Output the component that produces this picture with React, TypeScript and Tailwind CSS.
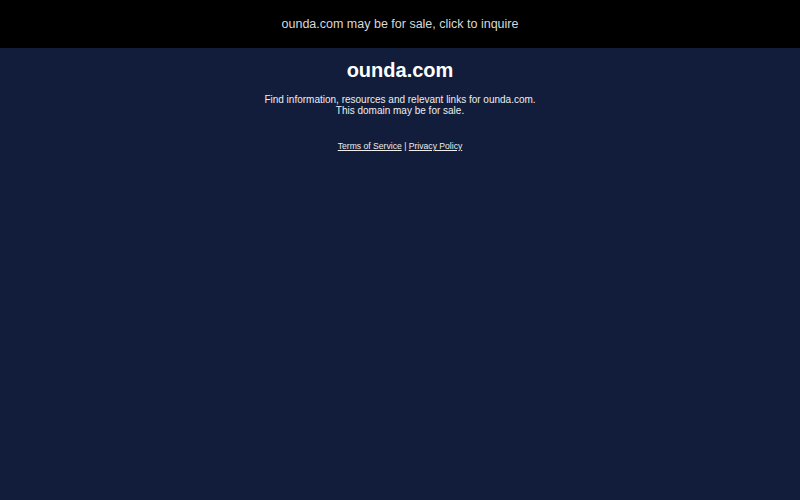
export default function App() {
  return (
    <div className="min-h-screen bg-[#111d3a] font-['Liberation_Sans',Arial,sans-serif] text-white">
      <div className="h-12 bg-black flex items-center justify-center">
        <a className="text-[12.5px] text-[#d8d8d8] cursor-pointer">
          ounda.com may be for sale, click to inquire
        </a>
      </div>
      <div className="flex flex-col items-center text-center">
        <h1 className="mt-[10px] text-[20px] font-bold leading-6">ounda.com</h1>
        <p className="mt-[12px] text-[10px] leading-[11px] text-[#eeeeee]">
          Find information, resources and relevant links for ounda.com.
          <br />
          This domain may be for sale.
        </p>
        <div className="mt-[24px] text-[8.6px] leading-[12px] text-[#eeeeee]">
          <a className="underline cursor-pointer">Terms of Service</a>
          <span> | </span>
          <a className="underline cursor-pointer">Privacy Policy</a>
        </div>
      </div>
    </div>
  )
}
